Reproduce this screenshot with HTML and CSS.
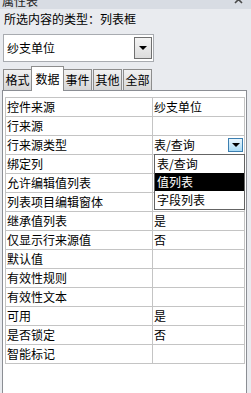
FILE: index.html
```html
<!DOCTYPE html>
<html lang="zh-CN">

<head>
    <meta charset="UTF-8">
    <meta name="viewport" content="width=device-width, initial-scale=1.0">
    <title>属性表</title>
    <link rel="stylesheet" href="styles.css">
</head>

<body>
    <div class="titlebar">
        <span class="title">属性表</span>
        <svg class="close" width="9" height="9" viewBox="0 0 9 9">
            <path d="M1 1 L8 8 M8 1 L1 8" stroke="#4a4a4a" stroke-width="1.6" fill="none" />
        </svg>
    </div>

    <div class="kind">所选内容的类型：列表框</div>

    <div class="combo">
        <span class="value">纱支单位</span>
        <span class="btn"><i class="arrow"></i></span>
    </div>

    <ul class="tabs">
        <li>格式</li>
        <li class="active">数据</li>
        <li>事件</li>
        <li>其他</li>
        <li>全部</li>
    </ul>

    <div class="panel">
        <div class="props">
            <div>控件来源</div>
            <div>纱支单位</div>
            <div>行来源</div>
            <div></div>
            <div>行来源类型</div>
            <div class="dd">
                <span>表/查询</span>
                <span class="dd-btn"><i class="arrow"></i></span>
                <!-- 下拉列表 -->
                <ul class="dd-list">
                    <li>表/查询</li>
                    <li class="sel">值列表</li>
                    <li>字段列表</li>
                </ul>
            </div>
            <div>绑定列</div>
            <div></div>
            <div>允许编辑值列表</div>
            <div></div>
            <div>列表项目编辑窗体</div>
            <div></div>
            <div>继承值列表</div>
            <div>是</div>
            <div>仅显示行来源值</div>
            <div>否</div>
            <div>默认值</div>
            <div></div>
            <div>有效性规则</div>
            <div></div>
            <div>有效性文本</div>
            <div></div>
            <div>可用</div>
            <div>是</div>
            <div>是否锁定</div>
            <div>否</div>
            <div>智能标记</div>
            <div></div>
        </div>
    </div>
</body>

</html>
```

FILE: styles.css
```css
* {
    padding: 0;
    margin: 0;
    box-sizing: border-box;
}

html,
body {
    height: 100%;
    overflow: hidden;
}

body {
    background-color: #e9ebef;
    color: #000;
    font-family: "Noto Sans CJK SC", sans-serif;
    font-size: 12px;
}

.titlebar {
    height: 9px;
    background-color: #d8dce3;
    display: flex;
    justify-content: space-between;
    padding: 0 8px 0 2px;
    overflow: hidden;
}

.titlebar .title {
    line-height: 16px;
    margin-top: -7px;
    color: #222;
}

.titlebar .close {
    margin-top: -5px;
}

.kind {
    margin: 2px 0 0 4px;
    line-height: 16px;
}

/* 组合框 */
.combo {
    margin: 7px 0 0 3px;
    width: 151px;
    height: 28px;
    border: 1px solid #a8abb0;
    background-color: #fff;
    display: flex;
    padding: 2px 1px 2px 2px;
}

.combo .value {
    flex: 1;
    line-height: 22px;
    padding-left: 1px;
}

.combo .btn {
    width: 18px;
    border: 1px solid #707070;
    background: linear-gradient(#f4f4f4, #dcdcdc);
    display: flex;
    align-items: center;
    justify-content: center;
}

.arrow {
    width: 0;
    height: 0;
    border-left: 4px solid transparent;
    border-right: 4px solid transparent;
    border-top: 4px solid #000;
}

/* 选项卡 */
.tabs {
    list-style: none;
    display: flex;
    align-items: flex-end;
    gap: 1px;
    height: 25px;
    margin: 4px 0 -1px 3px;
    position: relative;
    z-index: 1;
}

.tabs li {
    width: 29px;
    height: 21px;
    margin-bottom: 1px;
    border: 1px solid #8d8d8d;
    border-bottom: none;
    background: linear-gradient(#f2f2f2, #d6d6d6);
    text-align: center;
    line-height: 19px;
}

.tabs li.active {
    width: 33px;
    height: 25px;
    margin: 0 -2px;
    background: #fff;
    line-height: 24px;
    position: relative;
}

.panel {
    margin-left: 2px;
    width: 245px;
    height: 320px;
    border: 1px solid #8b8e94;
    background-color: #fff;
    padding: 6px 0 0 2px;
}

/* 属性网格 */
.props {
    display: grid;
    grid-template-columns: 147px 92px;
    width: 240px;
    border-top: 1px solid #c4c4c4;
    border-left: 1px solid #c4c4c4;
}

.props > div {
    height: 19px;
    border-right: 1px solid #c4c4c4;
    border-bottom: 1px solid #c4c4c4;
    line-height: 18px;
    padding-left: 1px;
    white-space: nowrap;
}

.props > div.dd {
    position: relative;
    display: flex;
    align-items: center;
    justify-content: space-between;
}

.dd-btn {
    width: 15px;
    height: 14px;
    margin-right: 1px;
    border: 1px solid #3c7fb1;
    background: linear-gradient(#eaf6fd, #a9dbf6);
    display: flex;
    align-items: center;
    justify-content: center;
}

.dd-list {
    list-style: none;
    position: absolute;
    left: 1px;
    top: 18px;
    width: 91px;
    border: 1px solid #646464;
    background-color: #fff;
    z-index: 2;
}

.dd-list li {
    height: 18px;
    line-height: 18px;
    padding-left: 2px;
}

.dd-list li.sel {
    background-color: #000;
    color: #fff;
}
```
